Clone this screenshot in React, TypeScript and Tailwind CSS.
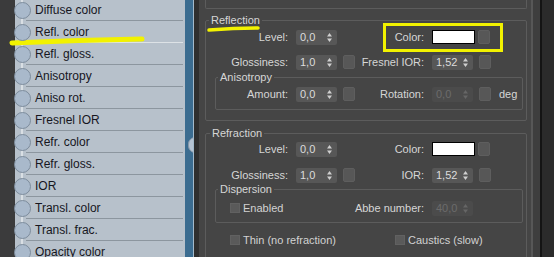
import React from "react";

const nodes = [
  "Diffuse color",
  "Refl. color",
  "Refl. gloss.",
  "Anisotropy",
  "Aniso rot.",
  "Fresnel IOR",
  "Refr. color",
  "Refr. gloss.",
  "IOR",
  "Transl. color",
  "Transl. frac.",
  "Opacity color",
];

function Arrows({ dim }: { dim?: boolean }) {
  return (
    <svg width="5" height="9" viewBox="0 0 5 9" className={dim ? "fill-[#666666]" : "fill-[#cfcfcf]"}>
      <polygon points="2.5,0 5,3.5 0,3.5" />
      <polygon points="0,5.5 5,5.5 2.5,9" />
    </svg>
  );
}

function Spinner({ value, dim }: { value: string; dim?: boolean }) {
  return (
    <div
      className={`w-[41px] h-[15px] flex items-center justify-between pl-[4px] pr-[5px] rounded-[2px] ${
        dim ? "bg-[#4b4b4b] text-[#6b6b6b]" : "bg-[#575757] text-[#dcdcdc]"
      }`}
    >
      <span>{value}</span>
      <Arrows dim={dim} />
    </div>
  );
}

function Square() {
  return <div className="w-[12px] h-[14px] rounded-[2px] bg-[#575757] border border-[#5e5e5e]" />;
}

function Swatch() {
  return <div className="w-[43px] h-[14px] bg-white border border-black" />;
}

function Check({ label }: { label: string }) {
  return (
    <div className="flex items-center whitespace-nowrap">
      <div className="w-[10px] h-[10px] bg-[#5a5a5a] border border-[#616161]" />
      <span className="ml-[3px] text-[#d2d2d2]">{label}</span>
    </div>
  );
}

function RightLabel({ children }: { children: React.ReactNode }) {
  return <div className="w-[69px] flex justify-end whitespace-nowrap">{children}</div>;
}

function Row({
  labelW,
  label,
  left,
  square,
  rLabel,
  right,
  suffix,
  className = "",
}: {
  labelW: string;
  label: string;
  left: React.ReactNode;
  square?: boolean;
  rLabel: string;
  right: React.ReactNode;
  suffix?: string;
  className?: string;
}) {
  return (
    <div className={`flex items-center h-[16px] ${className}`}>
      <div className={`${labelW} flex justify-end whitespace-nowrap`}>{label}</div>
      <div className="ml-[8px]">{left}</div>
      {square ? (
        <div className="ml-[6px]">
          <Square />
        </div>
      ) : (
        <div className="w-[18px]" />
      )}
      <RightLabel>{rLabel}</RightLabel>
      <div className="ml-[8px]">{right}</div>
      <div className="ml-[3px]">
        <Square />
      </div>
      {suffix && <div className="ml-[8px]">{suffix}</div>}
    </div>
  );
}

export default function App() {
  return (
    <div className="relative w-[554px] h-[257px] overflow-hidden flex bg-[#2b2b2b] font-['Liberation_Sans',Arial,sans-serif]">
      {/* node list */}
      <div className="relative w-[185px] h-full bg-[#b7c1cb] border-l-[15px] border-[#3b3b3c] text-[12px] text-[#16161e]">
        <div className="absolute left-[6px] top-0 h-full w-[2px] bg-[#d9dfe4]" />
        <div className="relative flex flex-col -mt-[1px]">
          {nodes.map((n, i) => (
            <div key={n} className="h-[22px] flex items-center relative">
              <div className="ml-[-1px] w-[17px] h-[17px] rounded-full bg-[#a9b9cb] border border-[#7d8c9c] z-10" />
              <span className="ml-[4px]">{n}</span>
              <div
                className={`absolute left-[11px] right-[2px] bottom-0 h-[1px] ${
                  i === 1 ? "bg-[#dde2e6]" : "bg-[#8c969f]"
                }`}
              />
            </div>
          ))}
        </div>
      </div>

      {/* blue border with socket */}
      <div className="relative w-[8px] h-full bg-[#3b6c90] overflow-hidden">
        <div className="absolute left-[3px] top-[137px] w-[14px] h-[16px] rounded-full bg-[#b4c3d3] border border-[#8798a9]" />
      </div>
      <div className="w-[1px] h-full bg-[#a3bacb]" />
      <div className="w-[5px] h-full bg-[#2f2f2f]" />

      {/* parameters panel */}
      <div className="w-[332px] h-full bg-[#454545] pl-[6px] text-[11px] text-[#d6d6d6]">
        <div className="w-[322px] h-[9px] border-x border-b border-[#5c5c5c] rounded-b-[2px]" />

        <fieldset className="mt-[5px] w-[322px] border border-[#5c5c5c] rounded-[2px] pb-[10px]">
          <legend className="ml-[3px] px-[2px] leading-[13px]">Reflection</legend>
          <Row
            className="mt-[2px]"
            labelW="w-[82px]"
            label="Level:"
            left={<Spinner value="0,0" />}
            rLabel="Color:"
            right={<Swatch />}
          />
          <Row
            className="mt-[9px]"
            labelW="w-[82px]"
            label="Glossiness:"
            left={<Spinner value="1,0" />}
            square
            rLabel="Fresnel IOR:"
            right={
              <div className="mr-[3px]">
                <Spinner value="1,52" />
              </div>
            }
          />
          <fieldset className="mt-[1px] ml-[9px] w-[308px] border border-[#5c5c5c] rounded-[2px] pb-[7px]">
            <legend className="ml-[2px] px-[2px] leading-[13px]">Anisotropy</legend>
            <Row
              className="mt-[2px]"
              labelW="w-[72px]"
              label="Amount:"
              left={<Spinner value="0,0" />}
              square
              rLabel="Rotation:"
              right={
                <div className="mr-[3px]">
                  <Spinner value="0,0" dim />
                </div>
              }
              suffix="deg"
            />
          </fieldset>
        </fieldset>

        <fieldset className="mt-[6px] w-[322px] border border-[#5c5c5c] rounded-[2px] pb-[20px]">
          <legend className="ml-[4px] px-[2px] leading-[13px]">Refraction</legend>
          <Row
            className="mt-[1px]"
            labelW="w-[82px]"
            label="Level:"
            left={<Spinner value="0,0" />}
            rLabel="Color:"
            right={<Swatch />}
          />
          <Row
            className="mt-[10px]"
            labelW="w-[82px]"
            label="Glossiness:"
            left={<Spinner value="1,0" />}
            square
            rLabel="IOR:"
            right={
              <div className="mr-[3px]">
                <Spinner value="1,52" />
              </div>
            }
          />
          <fieldset className="ml-[9px] w-[308px] border border-[#5c5c5c] rounded-[2px] pb-[6px]">
            <legend className="ml-[2px] px-[2px] leading-[13px]">Dispersion</legend>
            <div className="mt-[4px] flex items-center h-[16px]">
              <div className="w-[139px] pl-[14px]">
                <Check label="Enabled" />
              </div>
              <RightLabel>Abbe number:</RightLabel>
              <div className="ml-[8px]">
                <Spinner value="40,0" dim />
              </div>
            </div>
          </fieldset>
          <div className="mt-[9px] flex items-center h-[16px]">
            <div className="w-[189px] pl-[24px]">
              <Check label="Thin (no refraction)" />
            </div>
            <Check label="Caustics (slow)" />
          </div>
        </fieldset>
      </div>

      {/* right edge */}
      <div className="w-[2px] h-full bg-[#575757]" />
      <div className="w-[7px] h-full bg-[#3e3e3e]" />
      <div className="w-[2px] h-full bg-[#141414]" />
      <div className="flex-1 h-full bg-[#2b2b2b]" />

      {/* yellow annotations */}
      <svg className="absolute inset-0 pointer-events-none" width="554" height="257">
        <path d="M12 43 Q80 40 142 39" stroke="#f2f200" strokeWidth="5" strokeLinecap="round" fill="none" />
        <path d="M209 30 Q235 28 258 28" stroke="#f2f200" strokeWidth="3.5" strokeLinecap="round" fill="none" />
        <rect x="384.5" y="24.5" width="117" height="26" stroke="#f2f200" strokeWidth="3" fill="none" />
      </svg>
    </div>
  );
}
